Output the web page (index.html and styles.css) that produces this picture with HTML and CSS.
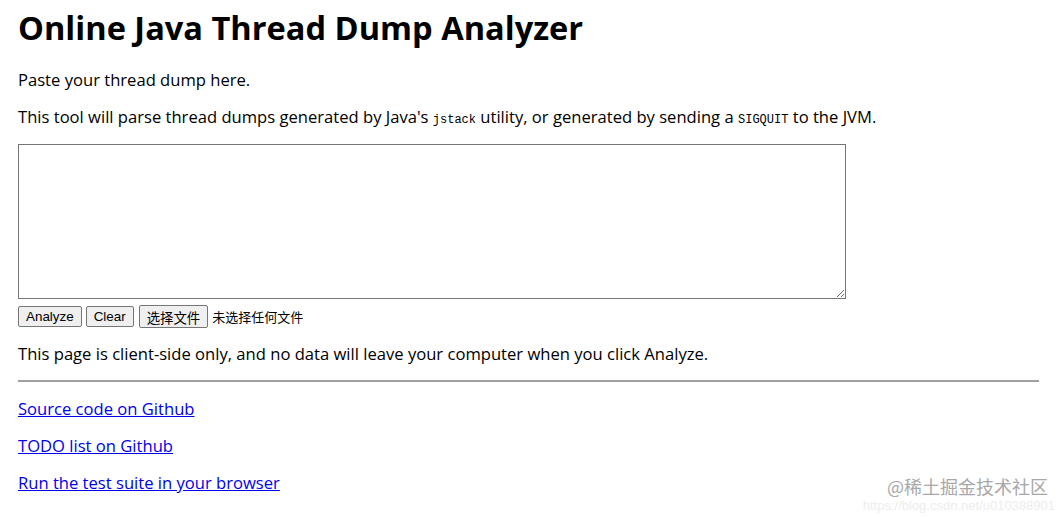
FILE: index.html
```html
<!DOCTYPE html>
<html lang="en">
<head>
    <meta charset="UTF-8">
    <title>Online Java Thread Dump Analyzer</title>
    <link rel="stylesheet" href="styles.css">
</head>
<body>
    <h1>Online Java Thread Dump Analyzer</h1>
    <p>Paste your thread dump here.</p>
    <p class="intro">This tool will parse thread dumps generated by Java's <code>jstack</code> utility, or generated by sending a <code>SIGQUIT</code> to the JVM.</p>
    <textarea class="dump"></textarea>
    <div class="controls">
        <button type="button">Analyze</button>
        <button type="button">Clear</button>
        <button type="button" class="file-btn">选择文件</button>
        <span class="file-name">未选择任何文件</span>
    </div>
    <p class="note">This page is client-side only, and no data will leave your computer when you click Analyze.</p>
    <hr>
    <p><a href="#">Source code on Github</a></p>
    <p><a href="#">TODO list on Github</a></p>
    <p><a href="#">Run the test suite in your browser</a></p>

    <div class="watermark">
        <span class="wm-name">@稀土掘金技术社区</span>
        <span class="wm-url">https://blog.csdn.net/u010388901</span>
    </div>
</body>
</html>
```

FILE: styles.css
```css
body {
    font-family: "Open Sans", "Noto Sans CJK SC", sans-serif;
    font-size: 16.6px;
    line-height: 21px;
    color: #000;
    margin: 0;
    padding: 0 25px 0 18px;
}
h1 {
    font-size: 32.6px;
    line-height: 40px;
    margin: 8px 0 21px;
}
p {
    margin: 16px 0;
}
.intro {
    margin-bottom: 13px;
}
.note {
    margin-top: 15px;
}
code {
    font-family: "Liberation Mono", monospace;
    font-size: 12px;
}
.dump {
    display: block;
    width: 828px;
    height: 155px;
    box-sizing: border-box;
    border: 1px solid #767676;
    margin: 0;
}
.controls {
    display: flex;
    align-items: center;
    gap: 4px;
    margin-top: 6px;
    height: 23px;
}
.controls button {
    font-family: "Liberation Sans", Arial, sans-serif;
    font-size: 13.4px;
    color: #000;
    height: 21px;
    padding: 0 7px;
    background-color: #efefef;
    border: 1px solid #767676;
    border-radius: 2px;
}
.controls .file-btn {
    font-family: "Noto Sans CJK SC", sans-serif;
    height: 23px;
    margin-left: 1px;
}
.file-name {
    font-family: "Noto Sans CJK SC", sans-serif;
    font-size: 13px;
}
hr {
    border: none;
    border-top: 2px solid #a0a0a0;
    margin: 0;
}
a {
    color: #0000ee;
}
.watermark {
    position: absolute;
    right: 9px;
    top: 477px;
    display: flex;
    flex-direction: column;
    align-items: flex-end;
    gap: 3px;
}
.wm-name {
    font-family: "Noto Sans CJK SC", sans-serif;
    font-size: 18px;
    line-height: 19px;
    color: #a8a8a8;
    margin-right: 7px;
    white-space: nowrap;
}
.wm-url {
    font-family: "Liberation Sans", sans-serif;
    font-size: 13px;
    line-height: 14px;
    color: #ededed;
    white-space: nowrap;
}
```
